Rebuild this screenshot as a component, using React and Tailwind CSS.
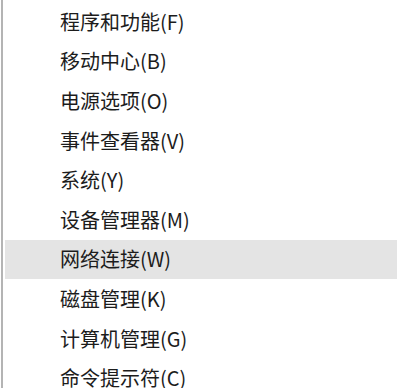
export default function App() {
  const items = [
    "程序和功能(F)",
    "移动中心(B)",
    "电源选项(O)",
    "事件查看器(V)",
    "系统(Y)",
    "设备管理器(M)",
    "网络连接(W)",
    "磁盘管理(K)",
    "计算机管理(G)",
    "命令提示符(C)",
  ];
  return (
    <div
      className="w-[400px] h-[388px] overflow-hidden bg-white flex"
      style={{ fontFamily: '"Noto Sans CJK SC", "Noto Sans", sans-serif' }}
    >
      <div className="w-[2px] bg-[#b4b4b4] ml-px shrink-0" />
      <div className="flex-1 flex flex-col pt-[2px] pl-[2px] pr-[3px]">
        {items.map((t, i) => (
          <div
            key={t}
            className={
              "h-[39.6px] shrink-0 flex items-center pl-[55px] text-[20px] text-[#1c1c1c] " +
              (i === 6 ? "bg-[#e4e4e4]" : "")
            }
          >
            {t}
          </div>
        ))}
      </div>
    </div>
  );
}
